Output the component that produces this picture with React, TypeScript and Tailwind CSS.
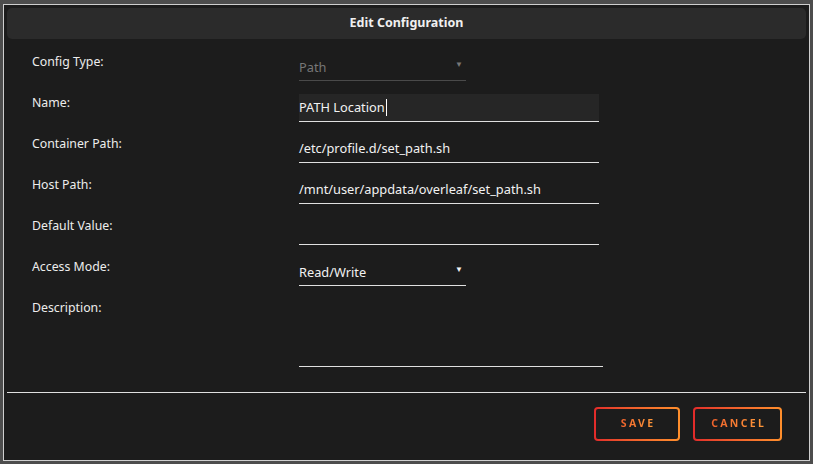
import React from "react";

const font = { fontFamily: "'Noto Sans', 'Open Sans', sans-serif" };

interface IRow {
  label: string;
  value?: string;
  kind: "text" | "select" | "textarea";
  disabled?: boolean;
  focused?: boolean;
}

const rows: IRow[] = [
  { label: "Config Type:", value: "Path", kind: "select", disabled: true },
  { label: "Name:", value: "PATH Location", kind: "text", focused: true },
  { label: "Container Path:", value: "/etc/profile.d/set_path.sh", kind: "text" },
  { label: "Host Path:", value: "/mnt/user/appdata/overleaf/set_path.sh", kind: "text" },
  { label: "Default Value:", value: "", kind: "text" },
  { label: "Access Mode:", value: "Read/Write", kind: "select" },
  { label: "Description:", value: "", kind: "textarea" },
];

const Field = ({ row }: { row: IRow }) => {
  if (row.kind === "select") {
    return (
      <div
        className={`w-[167px] h-[28px] flex items-center justify-between border-b pr-[3px] ${
          row.disabled ? "border-[#4a4a4a] text-[#777]" : "border-[#e0e0e0] text-[#f2f2f2]"
        }`}
      >
        <span className="text-[12.8px] leading-none pt-[1px]">{row.value}</span>
        <span className="text-[8px] leading-none -mt-[6px]">▼</span>
      </div>
    );
  }
  if (row.kind === "textarea") {
    return <div className="w-[304px] h-[68px] border-b border-[#e0e0e0]" />;
  }
  return (
    <div
      className={`w-[300px] h-[28px] flex items-center border-b border-[#e0e0e0] text-[12.8px] text-[#f2f2f2] ${
        row.focused ? "bg-[#262626]" : ""
      }`}
    >
      <span className="leading-none">{row.value}</span>
      {row.focused && <span className="w-px h-[17px] bg-white ml-px" />}
    </div>
  );
};

const GradientButton = ({ label, width }: { label: string; width: string }) => (
  <div className={`${width} h-[34px] p-[2px] rounded-[4px] bg-gradient-to-r from-[#e22a2a] to-[#ff8f2c]`}>
    <div className="w-full h-full rounded-[2px] bg-[#1c1c1c] flex items-center justify-center">
      <span className="text-[10.5px] font-bold tracking-[0.22em] pl-[0.22em] bg-gradient-to-r from-[#f0602c] to-[#ff9a3a] bg-clip-text text-transparent">
        {label}
      </span>
    </div>
  </div>
);

export default function App() {
  return (
    <div className="w-[813px] h-[464px] bg-[#4d4d4d] pl-[3px] pt-[4px]" style={font}>
      <div className="w-[807px] h-[457px] border border-[#cfcfcf] bg-[#1c1c1c] flex flex-col">
        <div className="mx-[3px] mt-[3px] h-[31px] rounded-[5px] bg-[#2b2b2b] flex items-center justify-center">
          <span className="text-[12.5px] font-bold text-[#f0f0f0]">Edit Configuration</span>
        </div>

        <div className="flex flex-col gap-[13px] mt-[14px] pl-[28px]">
          {rows.map((row) => (
            <div key={row.label} className="flex">
              <div className="w-[267px] text-[12.3px] text-[#ededed] leading-[16px] pt-[1px]">{row.label}</div>
              <Field row={row} />
            </div>
          ))}
        </div>

        <div className="mx-[3px] mt-[25px] h-px bg-[#e0e0e0]" />

        <div className="flex justify-end gap-[13px] mt-[14px] pr-[27px]">
          <GradientButton label="SAVE" width="w-[86px]" />
          <GradientButton label="CANCEL" width="w-[89px]" />
        </div>
      </div>
    </div>
  );
}
